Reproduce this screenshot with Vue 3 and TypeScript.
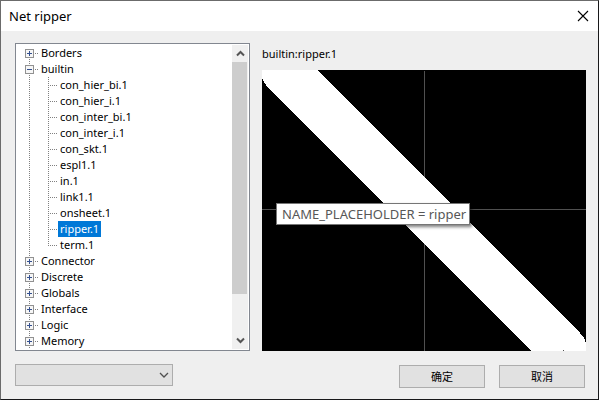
<script setup lang="ts">
import { computed, ref } from 'vue'

interface Library {
  name: string
  open: boolean
  symbols: string[]
}

const libraries = ref<Library[]>([
  { name: 'Borders', open: false, symbols: [] },
  {
    name: 'builtin',
    open: true,
    symbols: [
      'con_hier_bi.1',
      'con_hier_i.1',
      'con_inter_bi.1',
      'con_inter_i.1',
      'con_skt.1',
      'espl1.1',
      'in.1',
      'link1.1',
      'onsheet.1',
      'ripper.1',
      'term.1',
    ],
  },
  { name: 'Connector', open: false, symbols: [] },
  { name: 'Discrete', open: false, symbols: [] },
  { name: 'Globals', open: false, symbols: [] },
  { name: 'Interface', open: false, symbols: [] },
  { name: 'Logic', open: false, symbols: [] },
  { name: 'Memory', open: false, symbols: [] },
])

const selected = ref({ library: 'builtin', symbol: 'ripper.1' })
const caption = computed(() => `${selected.value.library}:${selected.value.symbol}`)

function isSelected(library: string, symbol: string): boolean {
  return selected.value.library === library && selected.value.symbol === symbol
}
</script>

<template>
  <div class="dialog">
    <header class="titlebar">
      <h1 class="title">Net ripper</h1>
      <button class="close" type="button" aria-label="Close">
        <svg width="12" height="12" viewBox="0 0 12 12">
          <path d="M1 1 11 11M11 1 1 11" fill="none" stroke="#000" stroke-width="1.1" />
        </svg>
      </button>
    </header>

    <main class="body">
      <section class="tree">
        <ul class="roots">
          <li v-for="lib in libraries" :key="lib.name">
            <div class="row">
              <button
                class="expander"
                type="button"
                :aria-label="lib.name"
                :aria-expanded="lib.open"
                @click="lib.open = !lib.open"
              >
                <svg width="9" height="9" viewBox="0 0 9 9" shape-rendering="crispEdges">
                  <rect x="0.5" y="0.5" width="8" height="8" fill="#f6f6f6" stroke="#919191" />
                  <path d="M2 4.5H7" stroke="#34508f" />
                  <path v-if="!lib.open" d="M4.5 2V7" stroke="#34508f" />
                </svg>
              </button>
              <span class="stub"></span>
              <button class="label" type="button" @click="lib.open = !lib.open">{{ lib.name }}</button>
            </div>
            <ul v-if="lib.open && lib.symbols.length" class="leaves">
              <li v-for="symbol in lib.symbols" :key="symbol" class="row">
                <span class="branch"></span>
                <button
                  class="label"
                  type="button"
                  :class="{ active: isSelected(lib.name, symbol) }"
                  @click="selected = { library: lib.name, symbol }"
                >{{ symbol }}</button>
              </li>
            </ul>
          </li>
        </ul>
        <div class="scrollbar">
          <button class="arrow" type="button" aria-label="Scroll up">
            <svg width="9" height="7" viewBox="0 0 9 7">
              <path d="M1 5.5 4.5 2 8 5.5" fill="none" stroke="#555" stroke-width="2" />
            </svg>
          </button>
          <div class="track"><div class="thumb"></div></div>
          <button class="arrow" type="button" aria-label="Scroll down">
            <svg width="9" height="7" viewBox="0 0 9 7">
              <path d="M1 1.5 4.5 5 8 1.5" fill="none" stroke="#555" stroke-width="2" />
            </svg>
          </button>
        </div>
      </section>

      <section class="preview">
        <p class="caption">{{ caption }}</p>
        <div class="canvas">
          <svg class="drawing" viewBox="0 0 324 281" preserveAspectRatio="none" shape-rendering="crispEdges">
            <rect width="324" height="281" fill="#000" />
            <path d="M162.5 1V281M0 139.5H324" stroke="#505050" />
            <path d="M0 0H55L318 263L322 268L324 273V281H269L6 18L2 12L0 8Z" fill="#fff" />
            <rect x="301" y="280" width="1" height="1" fill="#505050" />
          </svg>
          <div class="tooltip" role="tooltip">NAME_PLACEHOLDER = ripper</div>
        </div>
      </section>
    </main>

    <footer class="footer">
      <div class="picker">
        <select class="select" aria-label="Variant" disabled></select>
        <svg class="chevron" width="10" height="6" viewBox="0 0 10 6">
          <path d="M1 1 5 5 9 1" fill="none" stroke="#505050" stroke-width="1.3" />
        </svg>
      </div>
      <div class="actions">
        <button class="button" type="button">确定</button>
        <button class="button" type="button">取消</button>
      </div>
    </footer>
  </div>
</template>

<style>
body {
  margin: 0;
}
</style>

<style scoped>
.dialog {
  box-sizing: border-box;
  display: flex;
  flex-direction: column;
  min-height: 100vh;
  border: 1px solid #6b6b6b;
  border-right-color: #18181a;
  border-bottom-color: #18181a;
  background: #efefef;
  color: #000;
  font-family: "Noto Sans", "Noto Sans CJK SC", sans-serif;
  font-size: 11px;
  line-height: 16px;
}

button {
  margin: 0;
  padding: 0;
  border: 0;
  background: none;
  color: inherit;
  font: inherit;
}

ul {
  margin: 0;
  padding: 0;
  list-style: none;
}

.titlebar {
  display: flex;
  align-items: center;
  justify-content: space-between;
  height: 30px;
  padding: 0 9px 0 8px;
  background: #fff;
}

.title {
  margin: 0;
  font-size: 13px;
  font-weight: 400;
  line-height: 20px;
}

.close {
  display: flex;
}

.body {
  flex: 1;
  display: flex;
  gap: 12px;
  padding: 12px 12px 0 14px;
}

.tree {
  box-sizing: border-box;
  flex: 0 0 235px;
  display: flex;
  justify-content: space-between;
  padding: 1px;
  border: 1px solid #828790;
  background: #fff;
}

.roots {
  flex: 1;
  padding-left: 8px;
  background: repeating-linear-gradient(#808080 0 1px, transparent 1px 2px) 12px 8px / 1px 100% no-repeat;
}

.row {
  display: flex;
  align-items: center;
  height: 16px;
}

.expander {
  display: flex;
}

.stub {
  width: 3px;
  height: 1px;
  margin: 0 1px;
  background: repeating-linear-gradient(90deg, #808080 0 1px, transparent 1px 2px);
}

.leaves {
  padding-left: 23px;
  background: repeating-linear-gradient(#808080 0 1px, transparent 1px 2px) 23px 0 / 1px calc(100% - 7px) no-repeat;
}

.branch {
  width: 10px;
  height: 1px;
  background: repeating-linear-gradient(90deg, #808080 0 1px, transparent 1px 2px);
}

.label {
  height: 16px;
  padding: 0 2px;
  white-space: nowrap;
}

.active {
  background: #0078d7;
  color: #fff;
}

.scrollbar {
  display: flex;
  flex-direction: column;
  width: 16px;
  background: #f0f0f0;
}

.arrow {
  display: flex;
  align-items: center;
  justify-content: center;
  height: 17px;
}

.track {
  flex: 1;
}

.thumb {
  height: 86%;
  margin-right: 1px;
  background: #cdcdcd;
}

.preview {
  flex: 1;
  display: flex;
  flex-direction: column;
}

.caption {
  margin: 0;
  padding: 3px 0 8px;
}

.canvas {
  flex: 1;
  position: relative;
  display: grid;
}

.drawing {
  display: block;
  width: 100%;
  height: 100%;
  min-height: 0;
}

.tooltip {
  position: absolute;
  top: 133px;
  left: 14px;
  padding: 1px 3px 1px 5px;
  border: 1px solid #767676;
  background: #fff;
  box-shadow: 2px 2px 3px rgba(0, 0, 0, 0.5);
  color: #575757;
  font-size: 13px;
  line-height: 18px;
  white-space: nowrap;
}

.footer {
  display: flex;
  align-items: flex-start;
  justify-content: space-between;
  padding: 13px 13px 11px 14px;
}

.picker {
  display: grid;
  align-items: center;
}

.select {
  grid-area: 1 / 1;
  box-sizing: border-box;
  width: 158px;
  height: 22px;
  border: 1px solid #adadad;
  border-radius: 0;
  background: #e1e1e1;
  appearance: none;
  opacity: 1;
}

.chevron {
  grid-area: 1 / 1;
  justify-self: end;
  margin-right: 4px;
  pointer-events: none;
}

.actions {
  display: flex;
  gap: 14px;
  padding-top: 1px;
}

.button {
  width: 86px;
  height: 23px;
  border: 1px solid #adadad;
  background: #e1e1e1;
}
</style>
